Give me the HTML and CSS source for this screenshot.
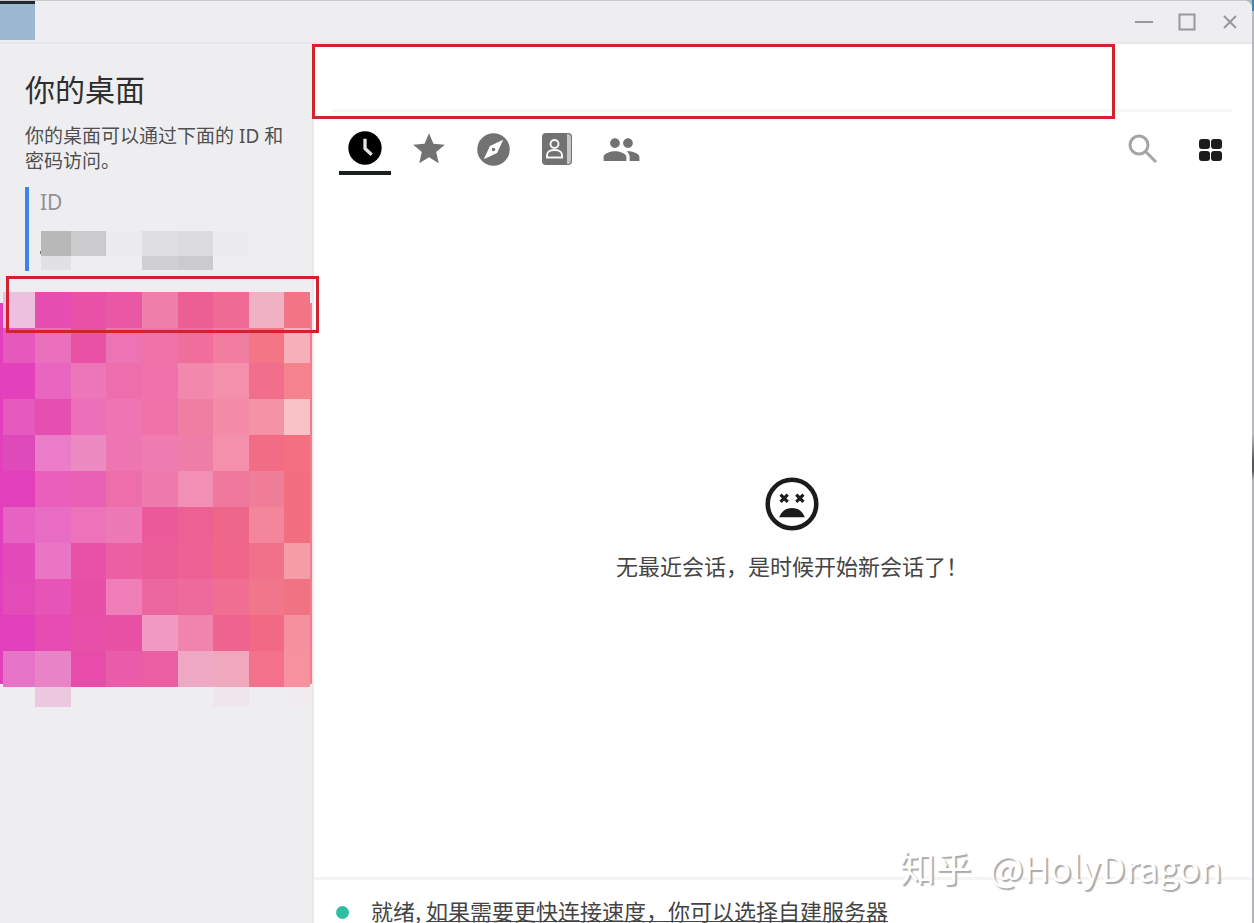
FILE: index.html
```html
<!DOCTYPE html>
<html lang="zh-CN">
<head>
<meta charset="utf-8">
<title>你的桌面</title>
<link rel="stylesheet" href="styles.css">
</head>
<body>
<div class="window">
  <header class="titlebar">
    <span class="app-icon"></span>
    <div class="window-buttons">
      <button type="button" aria-label="最小化"><svg width="18" height="18" viewBox="0 0 18 18"><path d="M0 9h18"/></svg></button>
      <button type="button" aria-label="最大化"><svg width="18" height="18" viewBox="0 0 18 18"><rect x="1.500" y="1.500" width="15" height="15"/></svg></button>
      <button type="button" aria-label="关闭"><svg width="18" height="18" viewBox="0 0 18 18"><path d="M3 3l12 12M15 3L3 15"/></svg></button>
    </div>
  </header>
  <div class="content">
    <aside class="sidebar">
      <h1>你的桌面</h1>
      <p class="hint">你的桌面可以通过下面的 ID 和密码访问。</p>
      <section class="id-card">
        <h2>ID</h2>
        <svg class="id-value" width="216" height="40" viewBox="0 0 216 40" shape-rendering="crispEdges">
          <rect x="0" y="21" width="2" height="3" fill="#77777a"/>
          <path fill="#b8b8b9" d="M1 1h30v25H1z"/><path fill="#cbcbcd" d="M31 1h35v25H31zM138 26h35v14h-35z"/>
          <path fill="#e1e1e3" d="M1 26h30v14H1z"/><path fill="#dfdfe1" d="M102 1h36v25h-36z"/>
          <path fill="#dcdcde" d="M138 1h35v25h-35z"/><path fill="#d0d0d2" d="M102 26h36v14h-36z"/>
          <path fill="#ececee" d="M173 1h36v25h-36zM66 1h36v25H66z"/>
        </svg>
      </section>
      <div class="banner">
        <svg id="mosaic" width="313" height="417" viewBox="0 291 313 417" shape-rendering="crispEdges">
          <rect x="0" y="303" width="3" height="381" fill="#e13fbb"/>
          <rect x="310" y="303" width="2" height="381" fill="#f17e8c"/>
        </svg>
        <span class="mark mark-banner"></span>
      </div>
    </aside>
    <main class="main">
      <div class="tab-strip"></div>
      <span class="mark mark-tabs"></span>
      <nav class="toolbar">
        <div class="group">
          <button class="tool active" type="button" aria-label="最近会话"><svg width="40" height="40" viewBox="0 0 24 24"><circle cx="12" cy="12" r="10"/><path d="M12 6.500v5.800l4 3.700" fill="none" stroke="#e4e4e4" stroke-width="2"/></svg></button>
          <button class="tool" type="button" aria-label="收藏"><svg width="38" height="38" viewBox="0 0 24 24"><path d="M12 17.270L18.180 21l-1.640-7.030L22 9.240l-7.190-.61L12 2 9.190 8.630 2 9.240l5.460 4.730L5.820 21z"/></svg></button>
          <button class="tool" type="button" aria-label="发现"><svg width="39" height="39" viewBox="0 0 24 24"><path d="M12 10.900a1.100 1.100 0 100 2.200 1.100 1.100 0 000-2.200zM12 2a10 10 0 100 20 10 10 0 000-20zm2.190 12.190L6 18l3.810-8.190L18 6z"/></svg></button>
          <button class="tool" type="button" aria-label="地址簿"><svg width="32" height="34" viewBox="0 0 32 34"><rect x="1" y="1" width="30" height="32" rx="4"/><path fill="#c6c6c6" d="M26 2h1.500Q30 3 30 6v22q0 3-2.500 4H26z"/><g fill="none" stroke="#f6f6f6" stroke-width="2"><circle cx="13.500" cy="12" r="4"/><path d="M6 25.500v-2.500c0-3.500 4-5 7.500-5s7.500 1.500 7.500 5v2.500z"/></g></svg></button>
          <button class="tool" type="button" aria-label="群组"><svg width="39" height="39" viewBox="0 0 24 24"><path d="M16 11c1.660 0 2.990-1.340 2.990-3S17.660 5 16 5s-3 1.340-3 3 1.340 3 3 3zm-8 0c1.660 0 2.990-1.340 2.990-3S9.660 5 8 5 5 6.340 5 8s1.340 3 3 3zm0 2c-2.330 0-7 1.170-7 3.500V19h14v-2.500c0-2.330-4.670-3.500-7-3.500zm8 0c-.29 0-.62.020-.97.050C16.190 13.890 17 15.020 17 16.500V19h6v-2.500c0-2.330-4.670-3.500-7-3.500z"/></svg></button>
        </div>
        <div class="group view">
          <button class="tool search" type="button" aria-label="搜索"><svg width="30" height="30" viewBox="0 0 30 30"><circle cx="11" cy="11" r="9"/><path d="M17.500 17.500L28 28"/></svg></button>
          <button class="tool tiles" type="button" aria-label="网格视图"><svg width="24" height="24" viewBox="0 0 24 24"><rect x="0" y="1" width="11" height="10" rx="3"/><rect x="12" y="1" width="11" height="10" rx="3"/><rect x="0" y="13" width="11" height="10" rx="3"/><rect x="12" y="13" width="11" height="10" rx="3"/></svg></button>
        </div>
      </nav>
      <section class="empty">
        <svg width="64" height="64" viewBox="0 0 24 24"><circle cx="12" cy="12" r="9.100" fill="none" stroke="#1c1c1c" stroke-width="1.700"/><path d="M7.700 8.500l2.700 2.700M10.400 8.500l-2.700 2.700M13.600 8.500l2.700 2.700M16.300 8.500l-2.700 2.700" stroke="#1c1c1c" stroke-width="1.200"/><path fill="#1c1c1c" d="M7.200 17c.8-2.300 2.600-3.500 4.800-3.500s4 1.200 4.800 3.500z"/></svg>
        <p>无最近会话，是时候开始新会话了！</p>
      </section>
      <footer class="status"><span class="dot"></span><span>就绪, <a href="#server">如果需要更快连接速度，你可以选择自建服务器</a></span></footer>
    </main>
  </div>
</div>
<div class="edge"></div>
<div class="watermark"><span>知乎</span><span>@HolyDragon</span></div>
<script src="mosaic.js"></script>
</body>
</html>
```
FILE: styles.css
```css
* { box-sizing: border-box; }
body {
  margin: 0;
  height: 100vh;
  overflow: hidden;
  display: flex;
  position: relative;
  background: #b9b9bb;
  color: #333;
  font-family: "Noto Sans CJK SC", "Noto Sans", sans-serif;
}
h1, h2, p { margin: 0; font-weight: 400; }
button { border: 0; padding: 0; background: none; display: flex; }
svg { display: block; flex: none; }

.window {
  flex: 1;
  min-width: 0;
  display: flex;
  flex-direction: column;
  background: #fff;
  border-top: 1px solid #c9c9cb;
  border-top-right-radius: 8px;
  overflow: hidden;
}
.edge {
  width: 2px;
  background: linear-gradient(#3a86bd 0 11px, #bababc 11px 47%, #55555a 50% 51%, #b4b4b6 52%);
}
.titlebar {
  flex: none;
  height: 43px;
  display: flex;
  justify-content: space-between;
  background: #eeeef0;
  border-bottom: 2px solid #e6e8e8;
}
.app-icon {
  width: 35px;
  height: 39px;
  background: #9bb8d2;
  border-top: 3px solid #1f292e;
}
.window-buttons {
  display: flex;
  align-items: center;
  gap: 25px;
  padding-right: 13px;
}
.window-buttons svg { fill: none; stroke: #98989a; stroke-width: 2; }

.content { flex: 1; min-height: 0; display: flex; }
.sidebar {
  flex: none;
  width: 314px;
  background: #eeeef0;
  border-right: 2px solid #e8e8ea;
}
h1 {
  padding: 22px 25px 0;
  font-size: 30px;
  line-height: 44px;
  color: #2e2e2e;
}
.hint {
  padding: 14px 25px 0;
  font-family: "Noto Sans", "Noto Sans CJK SC", sans-serif;
  font-size: 19px;
  line-height: 25px;
  color: #505052;
}
.id-card {
  margin: 13px 25px 0;
  height: 84px;
  padding-left: 11px;
  border-left: 4px solid #3d83ee;
}
.id-card h2 {
  font-family: "Noto Sans", "Noto Sans CJK SC", sans-serif;
  font-size: 21px;
  line-height: 30px;
  color: #919193;
}
.id-value { margin-top: 13px; }
.banner { position: relative; margin-top: 20px; }
.mark { position: absolute; border: 3px solid #d2212f; z-index: 2; }
.mark-banner { left: 6px; right: -7px; top: -15px; height: 57px; }
.mark-tabs { left: -2px; right: 137px; top: 0; height: 75px; }

.main {
  flex: 1;
  min-width: 0;
  position: relative;
  display: flex;
  flex-direction: column;
}
.tab-strip {
  height: 68px;
  margin: 0 20px 0 18px;
  border-bottom: 3px solid #f6f6f6;
}
.toolbar {
  height: 64px;
  display: flex;
  justify-content: space-between;
  padding: 13px 15px 0 25px;
}
.group { display: flex; gap: 12px; }
.group.view { gap: 16px; }
.tool {
  width: 52px;
  height: 50px;
  padding-bottom: 2px;
  align-items: center;
  justify-content: center;
}
.tool svg { fill: #727272; }
.tool.active { padding: 0; border-bottom: 4px solid #1d2020; }
.tool.active svg { fill: #000; }
.tool.search svg { fill: none; stroke: #a4a4a4; stroke-width: 3; }
.tool.tiles { padding: 0; }
.tool.tiles svg { fill: #1c1c1c; }
.empty {
  flex: 1;
  display: flex;
  flex-direction: column;
  align-items: center;
  justify-content: center;
  gap: 12px;
  padding-left: 18px;
}
.empty p {
  font-size: 22px;
  line-height: 34px;
  color: #444;
}
.status {
  height: 46px;
  border-top: 3px solid #f4f4f4;
  display: flex;
  gap: 22px;
  padding: 13px 22px 0;
  font-size: 22px;
  line-height: 34px;
  white-space: nowrap;
  color: #444;
}
.status a {
  color: inherit;
  text-decoration-thickness: 1px;
  text-underline-offset: 1px;
  text-decoration-skip-ink: none;
}
.dot {
  width: 13px;
  height: 13px;
  margin-top: 13px;
  border-radius: 50%;
  background: #2fbda4;
}
.watermark {
  position: absolute;
  right: 32px;
  bottom: 31px;
  display: flex;
  gap: 18px;
  font-size: 36px;
  line-height: 52px;
  color: #fff;
  text-shadow: 2px 2px 1px #aaa;
}
```
FILE: mosaic.js
```js
const columns = [3, 35, 71, 106, 142, 178, 213, 249, 284, 310];
const rows = [292, 328, 363, 399, 435, 471, 507, 543, 579, 615, 651, 687, 707];
const colors = [
  "ecc1e0 e54db0 e951a7 e957a5 ed7faa ec5f94 ef6b95 f0b2c2 f27585",
  "e658bb ea6fbc e951a5 ec73b4 ef73a8 f06e9c f17da0 f37586 f7b0b8",
  "e341bb e865c0 ec76b8 ee6ead ef73aa f289ac f48fac f16f8d f5838d",
  "e659be e64fb2 eb6fb9 ed75b4 ef73a9 f07da2 f48ba8 f592a5 f9c2c7",
  "df4abb ea7cc8 ee8ac2 ed75b2 ee7cb0 ee7ea7 f48fac f16c84 f47080",
  "e240ba e95fbb e961b5 ee6eab ee7aae f28fb4 f0789f f17e98 f36f80",
  "e763c3 e86bc4 ec73b9 ed7ab7 ec5a9b ed6093 ef668b f4869b f36f80",
  "e449b9 ea75c4 e951a8 eb60a3 eb5d98 ed6194 ef668a f1708a f59da7",
  "e34cb7 e654b8 e74fa7 ee7db8 ec66a0 ed6a9c ef6e91 f1758b f17383",
  "e240ba e54bb0 e84fa8 e851a3 f198c3 f084ae ef638f f16985 f5919e",
  "e573c8 e883c7 e74caa e85ca9 e95fa1 efa8c3 f0a8bd f3718b f5929e",
  "eeeef0 ebc7e0 eeeef0 eeeef0 eeeef0 eeeef0 eee6eb eeeef0 efebee"
];
const picture = document.getElementById("mosaic");
colors.forEach((line, r) => line.split(" ").forEach((color, c) => {
  const cell = document.createElementNS("http://www.w3.org/2000/svg", "rect");
  cell.setAttribute("x", columns[c]);
  cell.setAttribute("y", rows[r]);
  cell.setAttribute("width", columns[c + 1] - columns[c]);
  cell.setAttribute("height", rows[r + 1] - rows[r]);
  cell.setAttribute("fill", "#" + color);
  picture.append(cell);
}));
```
